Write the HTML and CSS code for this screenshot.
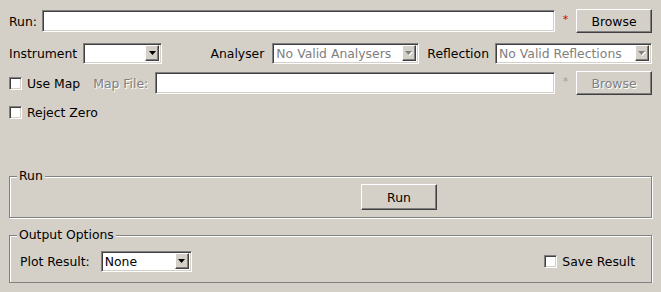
FILE: index.html
```html
<!DOCTYPE html>
<html lang="en">
<head>
<meta charset="UTF-8">
<title>Reflectometry Reduction</title>
<meta name="viewport" content="width=device-width,initial-scale=1">
<link rel="stylesheet" href="styles.css">
</head>
<body>
<div class="panel">

  <div class="row row-run">
    <label class="lbl" for="runFile">Run:</label>
    <input type="text" id="runFile" class="field">
    <span class="star">*</span>
    <button type="button" class="btn">Browse</button>
  </div>

  <div class="row row-inst">
    <span class="lbl lbl-inst">Instrument</span>
    <div class="combo combo-inst">
      <span class="combo-text"></span>
      <span class="combo-btn"><svg width="7" height="4" viewBox="0 0 7 4"><path d="M0 0h7L3.5 4z" fill="#000"/></svg></span>
    </div>
    <span class="lbl lbl-analyser">Analyser</span>
    <div class="combo combo-analyser disabled">
      <span class="combo-text">No Valid Analysers</span>
      <span class="combo-btn"><svg width="8" height="5" viewBox="0 0 8 5"><path d="M1 1h7L4.5 5z" fill="#fff"/><path d="M0 0h7L3.5 4z" fill="#808080"/></svg></span>
    </div>
    <span class="lbl lbl-refl">Reflection</span>
    <div class="combo combo-refl disabled">
      <span class="combo-text">No Valid Reflections</span>
      <span class="combo-btn"><svg width="8" height="5" viewBox="0 0 8 5"><path d="M1 1h7L4.5 5z" fill="#fff"/><path d="M0 0h7L3.5 4z" fill="#808080"/></svg></span>
    </div>
  </div>

  <div class="row row-map">
    <label class="check-lbl"><input type="checkbox" class="check"> Use Map</label>
    <span class="lbl off lbl-mapfile">Map File:</span>
    <input type="text" class="field" disabled>
    <span class="star off">*</span>
    <button type="button" class="btn off" disabled>Browse</button>
  </div>

  <div class="row row-reject">
    <label class="check-lbl"><input type="checkbox" class="check"> Reject Zero</label>
  </div>

  <fieldset class="group group-run">
    <legend>Run</legend>
    <div class="row">
      <button type="button" class="btn btn-run">Run</button>
    </div>
  </fieldset>

  <fieldset class="group group-out">
    <legend>Output Options</legend>
    <div class="row">
      <span class="lbl">Plot Result:</span>
      <div class="combo combo-plot">
        <span class="combo-text">None</span>
        <span class="combo-btn"><svg width="7" height="4" viewBox="0 0 7 4"><path d="M0 0h7L3.5 4z" fill="#000"/></svg></span>
      </div>
      <label class="check-lbl save"><input type="checkbox" class="check"> Save Result</label>
    </div>
  </fieldset>

</div>
</body>
</html>
```

FILE: styles.css
```css
body {
  margin: 0;
  background: #d4d0c8;
  font: 12.4px "DejaVu Sans", sans-serif;
  color: #000;
}
.panel {
  padding: 9px 9px 0 9px;
}
.row {
  display: flex;
  align-items: center;
  height: 24px;
}
.lbl {
  white-space: nowrap;
}
.off {
  color: #808080;
  text-shadow: 1px 1px 0 #fff;
}

/* sunken line edit */
.field {
  flex: 1;
  height: 22px;
  box-sizing: border-box;
  margin: 0;
  padding: 0 3px;
  font: inherit;
  background: #fff;
  border: 1px solid;
  border-color: #808080 #fff #fff #808080;
  box-shadow: inset 1px 1px 0 #404040, inset -1px -1px 0 #d4d0c8;
  outline: none;
}
.star {
  width: 21px;
  text-align: center;
  color: #d40000;
  font-size: 11px;
  margin-top: -4px;
}
.star.off {
  color: #a0a0a0;
  text-shadow: none;
}

/* raised push button */
.btn {
  width: 76px;
  height: 24px;
  box-sizing: border-box;
  margin: 0;
  padding: 0;
  font: inherit;
  color: #000;
  background: #d4d0c8;
  border: 1px solid;
  border-color: #fff #404040 #404040 #fff;
  box-shadow: inset -1px -1px 0 #808080;
}
.btn.off {
  color: #808080;
}

/* combo box */
.combo {
  display: flex;
  align-items: center;
  height: 21px;
  box-sizing: border-box;
  background: #fff;
  border: 1px solid;
  border-color: #808080 #fff #fff #808080;
  box-shadow: inset 1px 1px 0 #404040, inset -1px -1px 0 #d4d0c8;
  padding: 2px 2px 2px 3px;
}
.combo-text {
  flex: 1;
  white-space: nowrap;
  overflow: hidden;
}
.disabled .combo-text {
  color: #808080;
}
.combo-btn {
  width: 14px;
  height: 16px;
  box-sizing: border-box;
  display: flex;
  align-items: center;
  justify-content: center;
  background: #d4d0c8;
  border: 1px solid;
  border-color: #fff #404040 #404040 #fff;
  box-shadow: inset -1px -1px 0 #808080;
}

.row-run .lbl { margin-right: 5px; }
.row-inst { margin-top: 9px; height: 22px; }
.row-inst .lbl { margin-right: 8px; }
.row-inst .lbl-inst { margin-right: 6px; }
.combo-inst { width: 79px; }
.lbl-analyser { margin-left: auto; }
.combo-analyser { width: 147px; margin-right: 8px; }
.row-inst .lbl-refl { margin-right: 6px; }
.combo-refl { width: 157px; }
.row-map { margin-top: 7px; }
.lbl-mapfile { margin: 0 7px 0 13px; }
.row-reject { margin-top: 5px; }

/* check boxes */
.check-lbl {
  display: flex;
  align-items: center;
  white-space: nowrap;
}
.check {
  appearance: none;
  width: 13px;
  height: 13px;
  margin: 0 5px 0 0;
  box-sizing: border-box;
  background: #fff;
  border: 1px solid;
  border-color: #808080 #fff #fff #808080;
  box-shadow: inset 1px 1px 0 #404040, inset -1px -1px 0 #d4d0c8;
}

/* group boxes */
.group {
  margin: 0;
  min-width: 0;
  border: 1px solid #808080;
  box-shadow: inset 1px 1px 0 #fff, 1px 1px 0 #fff;
  padding: 1px 16px 7px 10px;
}
.group legend {
  padding: 0 2px;
  margin-left: -3px;
  line-height: 14px;
  background: #d4d0c8;
}
.group-run {
  margin-top: 45px;
}
.group-run .row {
  height: 26px;
}
.btn-run {
  width: 76px;
  height: 26px;
  margin-left: 341px;
}
.group-out {
  margin-top: 10px;
  padding-top: 7px;
  padding-bottom: 9px;
}
.combo-plot {
  width: 91px;
  margin-left: 11px;
}
.save {
  margin-left: auto;
}
```
